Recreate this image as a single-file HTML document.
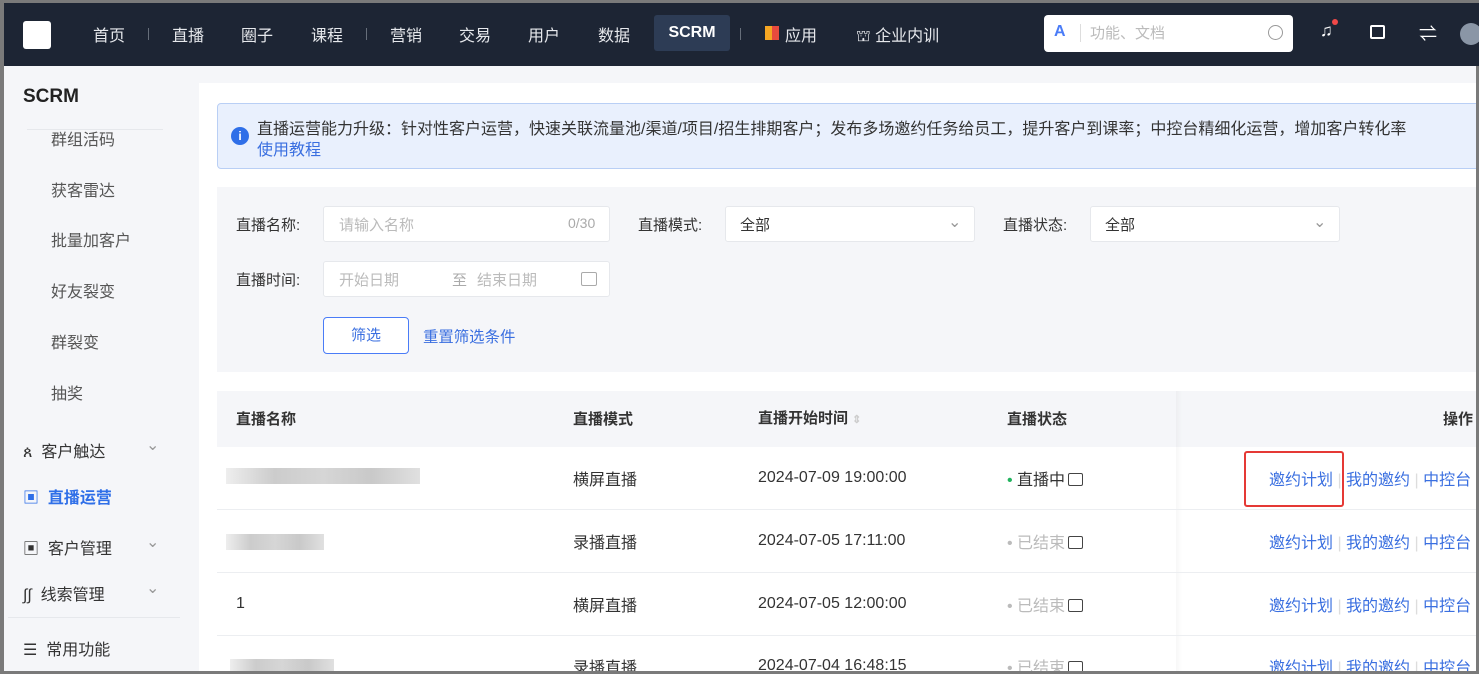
<!DOCTYPE html>
<html><head><meta charset="utf-8"><style>
*{margin:0;padding:0;box-sizing:border-box}
body{width:1479px;height:674px;overflow:hidden;background:#7a7a7a;font-family:"Liberation Sans","Noto Sans CJK SC",sans-serif;position:relative;color:#333}
.a{position:absolute;white-space:nowrap}
#top{left:4px;top:3px;width:1475px;height:63px;background:#1d2534}
.nav{top:19px;font-size:16px;color:#e6e8ec}
.sep{top:25px;width:1px;height:12px;background:#666e7a}
#page{left:4px;top:66px;width:1472px;height:605px;background:#f5f6f9;overflow:hidden}
.side{font-size:16px;color:#555}
.main{left:195px;top:17px;width:1290px;height:600px;background:#fff}
.lbl{font-size:15px;color:#333}
.inp{background:#fff;border:1px solid #e6e8ec;border-radius:3px;height:36px}
.ph{font-size:15px;color:#bbb}
.th{font-size:15px;font-weight:bold;color:#333}
.td{font-size:16px;color:#333}
.lk{font-size:16px;color:#3a6fe0}
.row{left:213px;width:1270px;height:1px;background:#eceef1}
.blur{background:linear-gradient(90deg,#eee,#ccc,#d6d6d6,#c9c9c9,#e0e0e0);height:16px}
.ic{display:inline-block;width:15px;height:13px;border:1.5px solid #444;border-radius:2px;vertical-align:-1px;margin-left:3px}
</style></head><body>
<div id="top" class="a">
 <div class="a" style="left:19px;top:18px;width:28px;height:28px;background:#fff;border-radius:3px"></div>
 <div class="a nav" style="left:89px">首页</div><div class="a sep" style="left:144px"></div>
 <div class="a nav" style="left:168px">直播</div>
 <div class="a nav" style="left:237px">圈子</div>
 <div class="a nav" style="left:307px">课程</div><div class="a sep" style="left:362px"></div>
 <div class="a nav" style="left:386px">营销</div>
 <div class="a nav" style="left:455px">交易</div>
 <div class="a nav" style="left:524px">用户</div>
 <div class="a nav" style="left:594px">数据</div>
 <div class="a" style="left:650px;top:12px;width:76px;height:36px;background:#2d3c55;border-radius:3px;color:#fff;font-weight:bold;font-size:16px;text-align:center;line-height:36px">SCRM</div>
 <div class="a sep" style="left:736px"></div>
 <div class="a" style="left:761px;top:23px;width:14px;height:14px;background:linear-gradient(90deg,#f5a623 50%,#e84a3d 50%)"></div>
 <div class="a nav" style="left:781px">应用</div>
 <div class="a nav" style="left:852px">⛫ 企业内训</div>
 <div class="a" style="left:1040px;top:12px;width:249px;height:37px;background:#fff;border-radius:4px">
  <div class="a" style="left:10px;top:8px;color:#4a7cf7;font-weight:bold;font-size:16px">A</div>
  <div class="a" style="left:36px;top:9px;width:1px;height:18px;background:#ddd"></div>
  <div class="a ph" style="left:46px;top:7px">功能、文档</div>
  <div class="a" style="left:224px;top:10px;width:15px;height:15px;border:1.5px solid #999;border-radius:50%"></div>
 </div>
 <div class="a" style="left:1316px;top:18px;color:#fff;font-size:17px">♫</div>
 <div class="a" style="left:1328px;top:16px;width:6px;height:6px;background:#f04848;border-radius:50%"></div>
 <div class="a" style="left:1366px;top:22px;width:15px;height:14px;border:2px solid #fff;border-radius:2px"></div>
 <div class="a" style="left:1415px;top:17px;color:#fff;font-size:18px">⇌</div>
 <div class="a" style="left:1456px;top:20px;width:22px;height:22px;background:#8a96a6;border-radius:50%"></div>
</div>
<div id="page" class="a">
 <div class="a" style="left:19px;top:20px;font-size:19px;font-weight:bold;color:#222">SCRM</div>
 <div class="a" style="left:23px;top:63px;width:136px;height:1px;background:#e6e8ec"></div>
 <div class="a side" style="left:47px;top:60px">群组活码</div>
 <div class="a side" style="left:47px;top:111px">获客雷达</div>
 <div class="a side" style="left:47px;top:161px">批量加客户</div>
 <div class="a side" style="left:47px;top:212px">好友裂变</div>
 <div class="a side" style="left:47px;top:263px">群裂变</div>
 <div class="a side" style="left:47px;top:314px">抽奖</div>
 <div class="a side" style="left:19px;top:372px;color:#333">ጰ&nbsp; 客户触达</div><div class="a side" style="left:142px;top:369px;color:#999">⌄</div>
 <div class="a side" style="left:19px;top:418px;color:#2f6fe8;font-weight:bold">▣&nbsp; 直播运营</div>
 <div class="a side" style="left:19px;top:469px;color:#333">▣&nbsp; 客户管理</div><div class="a side" style="left:142px;top:466px;color:#999">⌄</div>
 <div class="a side" style="left:19px;top:515px;color:#333">∫∫&nbsp; 线索管理</div><div class="a side" style="left:142px;top:512px;color:#999">⌄</div>
 <div class="a" style="left:4px;top:551px;width:172px;height:1px;background:#e6e8ec"></div>
 <div class="a side" style="left:19px;top:570px;color:#333">☰&nbsp; 常用功能</div>
 <div class="a main"></div>
 <div class="a" style="left:213px;top:37px;width:1270px;height:66px;background:#e9f0fd;border:1px solid #b9cff5;border-radius:4px"></div>
 <div class="a" style="left:227px;top:61px;width:18px;height:18px;border-radius:50%;background:#2f6fe8;color:#fff;font-size:12px;font-weight:bold;text-align:center;line-height:18px">i</div>
 <div class="a" style="left:253px;top:49px;font-size:16px;color:#333">直播运营能力升级：针对性客户运营，快速关联流量池/渠道/项目/招生排期客户；发布多场邀约任务给员工，提升客户到课率；中控台精细化运营，增加客户转化率</div>
 <div class="a lk" style="left:253px;top:70px">使用教程</div>
 <div class="a" style="left:213px;top:121px;width:1270px;height:185px;background:#f5f6f9"></div>
 <div class="a lbl" style="left:232px;top:148px">直播名称:</div>
 <div class="a inp" style="left:319px;top:140px;width:287px"><span class="a ph" style="left:15px;top:7px">请输入名称</span><span class="a ph" style="left:244px;top:8px;font-size:14px;color:#aaa">0/30</span></div>
 <div class="a lbl" style="left:634px;top:148px">直播模式:</div>
 <div class="a inp" style="left:721px;top:140px;width:250px"><span class="a td" style="left:14px;top:7px;font-size:15px">全部</span><span class="a" style="left:222px;top:5px;color:#999">⌄</span></div>
 <div class="a lbl" style="left:999px;top:148px">直播状态:</div>
 <div class="a inp" style="left:1086px;top:140px;width:250px"><span class="a td" style="left:14px;top:7px;font-size:15px">全部</span><span class="a" style="left:222px;top:5px;color:#999">⌄</span></div>
 <div class="a lbl" style="left:232px;top:203px">直播时间:</div>
 <div class="a inp" style="left:319px;top:195px;width:287px"><span class="a ph" style="left:15px;top:7px">开始日期</span><span class="a ph" style="left:128px;top:7px;color:#aaa">至</span><span class="a ph" style="left:153px;top:7px">结束日期</span><span class="a" style="left:257px;top:10px;width:16px;height:14px;border:1.5px solid #aaa;border-radius:2px"></span></div>
 <div class="a" style="left:319px;top:251px;width:86px;height:37px;border:1px solid #4a7cf7;border-radius:4px;background:#fff;color:#3a6fe0;font-size:15px;text-align:center;line-height:35px">筛选</div>
 <div class="a lk" style="left:419px;top:259px;font-size:15.4px">重置筛选条件</div>
 <div class="a" style="left:213px;top:325px;width:1270px;height:56px;background:#f5f6f9"></div>
 <div class="a" style="left:1172px;top:325px;width:6px;height:290px;background:linear-gradient(90deg,rgba(0,0,0,0.03),transparent)"></div>
 <div class="a th" style="left:232px;top:342px">直播名称</div>
 <div class="a th" style="left:569px;top:342px">直播模式</div>
 <div class="a th" style="left:754px;top:341px">直播开始时间 <span style="color:#ccc;font-size:11px">⇕</span></div>
 <div class="a th" style="left:1003px;top:342px">直播状态</div>
 <div class="a th" style="left:1439px;top:342px">操作</div>
 <div class="a blur" style="left:222px;top:402px;width:194px"></div>
 <div class="a td" style="left:569px;top:400px">横屏直播</div><div class="a td" style="left:754px;top:403px">2024-07-09 19:00:00</div>
 <div class="a td" style="left:1003px;top:400px"><span style="color:#22b35e">•</span> 直播中<span class="ic"></span></div>
 <div class="a row" style="top:443px"></div>
 <div class="a blur" style="left:222px;top:468px;width:98px"></div>
 <div class="a td" style="left:569px;top:463px">录播直播</div><div class="a td" style="left:754px;top:466px">2024-07-05 17:11:00</div>
 <div class="a td" style="left:1003px;top:463px;color:#bbb">• 已结束<span class="ic"></span></div>
 <div class="a row" style="top:506px"></div>
 <div class="a td" style="left:232px;top:529px">1</div>
 <div class="a td" style="left:569px;top:526px">横屏直播</div><div class="a td" style="left:754px;top:529px">2024-07-05 12:00:00</div>
 <div class="a td" style="left:1003px;top:526px;color:#bbb">• 已结束<span class="ic"></span></div>
 <div class="a row" style="top:569px"></div>
 <div class="a blur" style="left:226px;top:593px;width:104px"></div>
 <div class="a td" style="left:569px;top:588px">录播直播</div><div class="a td" style="left:754px;top:591px">2024-07-04 16:48:15</div>
 <div class="a td" style="left:1003px;top:588px;color:#bbb">• 已结束<span class="ic"></span></div>
 <div class="a lk" style="left:1265px;top:400px">邀约计划 <span style="color:#ddd">|</span> 我的邀约 <span style="color:#ddd">|</span> 中控台</div>
 <div class="a lk" style="left:1265px;top:463px">邀约计划 <span style="color:#ddd">|</span> 我的邀约 <span style="color:#ddd">|</span> 中控台</div>
 <div class="a lk" style="left:1265px;top:526px">邀约计划 <span style="color:#ddd">|</span> 我的邀约 <span style="color:#ddd">|</span> 中控台</div>
 <div class="a lk" style="left:1265px;top:588px">邀约计划 <span style="color:#ddd">|</span> 我的邀约 <span style="color:#ddd">|</span> 中控台</div>
 <div class="a" style="left:1240px;top:385px;width:100px;height:56px;border:2px solid #e53935;border-radius:3px"></div>
</div>
</body></html>
